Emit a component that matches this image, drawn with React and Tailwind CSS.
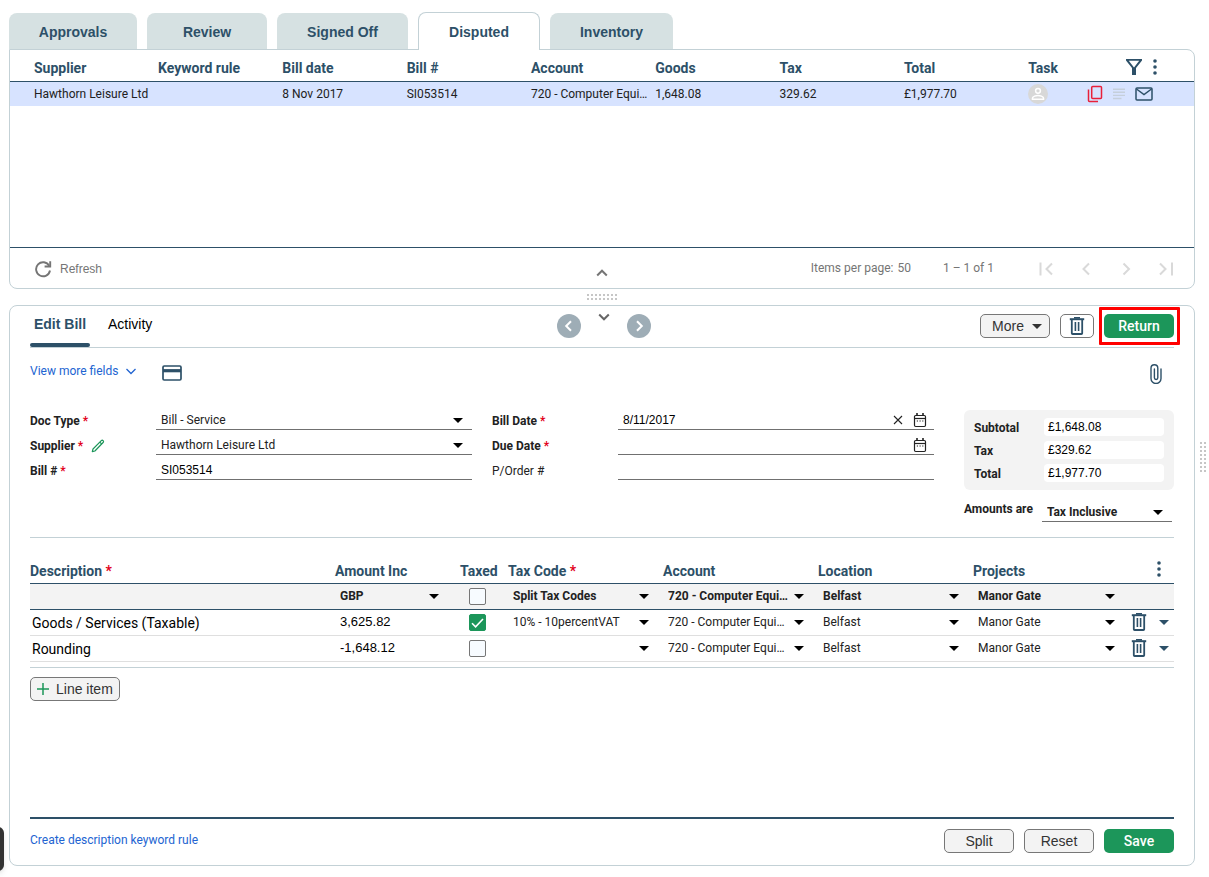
import React, { useState } from "react";

const roboto = "font-['Roboto','Liberation_Sans',sans-serif]";
const arial = "font-['Liberation_Sans',Arial,sans-serif]";

function Caret({ className = "" }) {
  return (
    <svg viewBox="0 0 10 5" className={`h-[5px] w-[10px] shrink-0 fill-current ${className}`} aria-hidden="true">
      <path d="M0 0h10L5 5z" />
    </svg>
  );
}

function Chevron({ dir, className = "size-3.5" }) {
  const paths = {
    up: "M2.2 9.5 7 4.700l4.800 4.800",
    down: "M2.2 4.5 7 9.300l4.800-4.800",
    left: "M9 2.2 4.2 7 9 11.8",
    right: "M5 2.2 9.8 7 5 11.8",
  };
  return (
    <svg viewBox="0 0 14 14" className={`${className} fill-none stroke-current stroke-2`} aria-hidden="true">
      <path d={paths[dir]} />
    </svg>
  );
}

function PageArrow({ d, bar }) {
  return (
    <svg viewBox="0 0 16 16" className="size-4 fill-none stroke-current stroke-2" aria-hidden="true">
      <path d={d} />
      {bar && <path d={bar} />}
    </svg>
  );
}

function Trash() {
  return (
    <svg viewBox="0 0 16 18" className="h-[18px] w-4 fill-none stroke-current" aria-hidden="true">
      <path d="M.8 2.200h14.400" strokeWidth="2" />
      <path d="M5 .8h6" strokeWidth="1.600" />
      <path d="M2.800 2.500v13.700q0 .8.800.8h8.800q.8 0 .8-.8V2.500" strokeWidth="1.800" />
      <path d="M6.400 5v9M9.600 5v9" strokeWidth="1.600" />
    </svg>
  );
}

function Dots() {
  return (
    <svg viewBox="0 0 4 16" className="h-4 w-1 fill-current" aria-hidden="true">
      <circle cx="2" cy="2" r="1.8" />
      <circle cx="2" cy="8" r="1.8" />
      <circle cx="2" cy="14" r="1.8" />
    </svg>
  );
}

function Calendar() {
  return (
    <svg viewBox="0 0 14 16" className="h-4 w-3.5 fill-none stroke-[#222]" aria-hidden="true">
      <rect x="1.5" y="3.5" width="11" height="11" rx="1.2" strokeWidth="1.2" />
      <path d="M1.5 6.5h11" strokeWidth="1.2" />
      <path d="M4 1v3M10 1v3" strokeWidth="1.6" />
      <path d="M3.800 9h6.600" strokeWidth="1.200" strokeDasharray="1.200 1.500" />
    </svg>
  );
}

function GripDots({ cols, rows, className }) {
  const cells = [];
  for (let r = 0; r < rows; r++)
    for (let c = 0; c < cols; c++)
      cells.push(<rect key={`${r}-${c}`} x={c * 4} y={r * 4} width="2" height="2" />);
  return (
    <svg viewBox={`0 0 ${cols * 4 - 2} ${rows * 4 - 2}`} className={`fill-[#c6c6c6] ${className}`} aria-hidden="true">
      {cells}
    </svg>
  );
}

function Select({ label, id, value, className = "", caret = "mr-[9px]" }) {
  return (
    <div className={`grid grid-cols-1 items-center ${className}`}>
      <select
        id={id}
        aria-label={label}
        defaultValue={value}
        className="col-start-1 row-start-1 h-[18px] w-full appearance-none bg-transparent pl-[5px] outline-none"
      >
        <option>{value}</option>
      </select>
      <Caret className={`pointer-events-none col-start-1 row-start-1 justify-self-end text-black ${caret}`} />
    </div>
  );
}

function Star() {
  return <span className="text-[#e2001a]"> *</span>;
}

function Label({ htmlFor, children, required, plain }) {
  return (
    <label htmlFor={htmlFor} className={`w-[126px] shrink-0 pt-1.5 text-xs ${plain ? "" : "font-bold"}`}>
      {children}
      {required && <Star />}
    </label>
  );
}

function Check({ label, initial = false }) {
  const [on, setOn] = useState(initial);
  return (
    <span className="grid size-[17px] grid-cols-1">
      <input
        type="checkbox"
        aria-label={label}
        checked={on}
        onChange={() => setOn(!on)}
        className="col-start-1 row-start-1 size-[17px] appearance-none rounded-xs border border-[#767676] bg-[#f7fbff] checked:border-[#1c965a] checked:bg-[#1c965a]"
      />
      {on && (
        <svg
          viewBox="0 0 17 17"
          className="pointer-events-none col-start-1 row-start-1 size-[17px] fill-none stroke-white stroke-[1.6]"
          aria-hidden="true"
        >
          <path d="M3 9.2 6.6 12.8 14 5" />
        </svg>
      )}
    </span>
  );
}

const tabs = [
  { name: "Approvals", width: "w-32" },
  { name: "Review", width: "w-[120px]" },
  { name: "Signed Off", width: "w-[131px]" },
  { name: "Disputed", width: "w-[122px]" },
  { name: "Inventory", width: "w-[123px]" },
];

function TopTabs() {
  return (
    <nav className={`z-10 flex h-[38px] items-end gap-2.5 text-sm font-bold text-[#2d5068] ${arial}`}>
      {tabs.map((t) => (
        <button
          key={t.name}
          type="button"
          className={
            t.name === "Disputed"
              ? `h-[38px] rounded-t-lg border border-b-0 border-[#c3d1d6] bg-white pt-px ${t.width}`
              : `mb-px h-9 rounded-t-lg bg-[#d6e1e2] pt-0.5 ${t.width}`
          }
        >
          {t.name}
        </button>
      ))}
    </nav>
  );
}

const billCols = ["Supplier", "Keyword rule", "Bill date", "Bill #", "Account", "Goods", "Tax", "Total"];
const billRow = ["Hawthorn Leisure Ltd", "", "8 Nov 2017", "SI053514", "720 - Computer Equi…", "1,648.08", "329.62", "£1,977.70"];

function BillsPanel() {
  return (
    <section className="-mt-px rounded-lg rounded-tl-none border border-[#c3d1d6] bg-white">
      <div className="h-[198px] border-b border-[#2d5068]">
        <table className="w-full table-fixed border-collapse text-left">
          <thead>
            <tr className="h-[31px] border-b border-[#2d5068] text-sm text-[#2d5068]">
              {billCols.map((c, i) => (
                <th key={c} className={`pt-[5px] font-bold ${i === 0 ? "w-[12.5%] pl-6" : "w-[10.5%]"}`}>
                  {c}
                </th>
              ))}
              <th className="w-[5%] pt-[5px] font-bold">Task</th>
              <th className="w-[9%] pt-1">
                <span className="flex items-center gap-2.5 pl-[38px]">
                  <button type="button" aria-label="Filter">
                    <svg viewBox="0 0 18 18" className="size-[18px] fill-current" aria-hidden="true">
                      <path fillRule="evenodd" d="M1 1h16v1.500L11 10v7H7v-7L1 2.500zM3.800 2.700 9 9.400l5.200-6.700z" />
                    </svg>
                  </button>
                  <button type="button" aria-label="Column options">
                    <Dots />
                  </button>
                </span>
              </th>
            </tr>
          </thead>
          <tbody>
            <tr className="h-[25px] bg-[#d7e3ff] text-xs text-[#212121]">
              {billRow.map((v, i) => (
                <td key={i} className={`whitespace-nowrap ${i === 0 ? "pl-6" : ""}`}>
                  {v}
                </td>
              ))}
              <td>
                <svg viewBox="0 0 20 20" className="size-5" aria-hidden="true">
                  <circle cx="10" cy="10" r="10" className="fill-[#d8d8d8]" />
                  <g className="fill-none stroke-white" strokeWidth="1.5">
                    <circle cx="10" cy="6.8" r="2.4" />
                    <path d="M4.5 15.2v-1.1c0-1.8 3.6-2.7 5.500-2.700s5.500.9 5.500 2.700v1.1z" />
                  </g>
                </svg>
              </td>
              <td>
                <div className="flex items-center gap-[9px]">
                  <svg viewBox="0 0 16 18" className="h-[18px] w-4 fill-none stroke-[#e8203a]" strokeWidth="1.500" aria-hidden="true">
                    <rect x="4.700" y="1.500" width="9.800" height="12" rx="1" />
                    <path d="M1.500 4.500v11q0 1 1 1h8.500" />
                  </svg>
                  <svg viewBox="0 0 14 12" className="h-3 w-3.5 stroke-[#c5cfdb]" strokeWidth="1.400" aria-hidden="true">
                    <path d="M1 1.200h12M1 4.300h12M1 7.400h12M1 10.500h8.500" />
                  </svg>
                  <svg viewBox="0 0 18 14" className="h-3.5 w-[18px] fill-none stroke-[#2d5068]" strokeWidth="1.500" aria-hidden="true">
                    <rect x="1" y="1" width="16" height="12" rx="1" />
                    <path d="M1.500 2 9 7.500 16.500 2" />
                  </svg>
                </div>
              </td>
            </tr>
          </tbody>
        </table>
      </div>
      <div className="grid h-10 grid-cols-[1fr_auto_1fr] items-center text-xs text-[#757575]">
        <button type="button" className={`flex items-center gap-2 justify-self-start pl-6 pt-px ${arial}`}>
          <svg viewBox="0 0 18 18" className="size-[18px] fill-none stroke-current" strokeWidth="1.900" aria-hidden="true">
            <path d="M15.200 5.800A7 7 0 1 0 16 10.500" />
            <path d="M16.200 1.200v5.300h-5.600" />
          </svg>
          Refresh
        </button>
        <button type="button" aria-label="Collapse list" className="pt-2.5">
          <Chevron dir="up" />
        </button>
        <div className="flex items-center justify-self-end pr-5">
          <span className="mr-1">Items per page:</span>
          <span className="mr-8">50</span>
          <span className="mr-11">1 – 1 of 1</span>
          <span className="flex gap-6 pt-0.5 text-[#d9d9d9]">
            <button type="button" aria-label="First page">
              <PageArrow d="M14 2.500 8.500 8 14 13.500" bar="M2.500 1.500v13" />
            </button>
            <button type="button" aria-label="Previous page">
              <PageArrow d="M11 2.500 5.500 8 11 13.500" />
            </button>
            <button type="button" aria-label="Next page">
              <PageArrow d="M5.500 2.500 11 8 5.500 13.500" />
            </button>
            <button type="button" aria-label="Last page">
              <PageArrow d="M2 2.500 7.500 8 2 13.500" bar="M14 1.500v13" />
            </button>
          </span>
        </div>
      </div>
    </section>
  );
}

const grayBtn = "h-6 rounded-[5px] border border-[#777] bg-[#f3f3f3] text-sm text-[#333]";
const greenBtn = "h-6 w-[70px] rounded-[5px] bg-[#1c965a] text-sm font-medium text-white";

function EditHeader() {
  return (
    <header className="grid h-[42px] grid-cols-[1fr_auto_1fr] border-b border-[#c3d1d6]">
      <nav className={`flex items-start gap-[18px] text-sm ${arial}`}>
        <button
          type="button"
          className="-mb-px flex h-[41px] w-[60px] flex-col items-center justify-between pt-2 font-bold text-[#2d5068]"
        >
          Edit Bill
          <span className="h-1 w-full rounded-xs bg-[#2d5068]" />
        </button>
        <button type="button" className="pt-2 text-black">
          Activity
        </button>
      </nav>
      <div className="flex items-start gap-4 pl-1 pt-2">
        <button type="button" aria-label="Previous bill" className="grid size-6 place-items-center rounded-full bg-[#9eadb6] text-white">
          <Chevron dir="left" />
        </button>
        <button type="button" aria-label="Collapse bill" className="-mt-1 text-[#666]">
          <Chevron dir="down" />
        </button>
        <button type="button" aria-label="Next bill" className="grid size-6 place-items-center rounded-full bg-[#9eadb6] text-white">
          <Chevron dir="right" />
        </button>
      </div>
      <div className="flex items-start gap-2.5 justify-self-end pt-2">
        <button type="button" className={`flex w-[70px] items-center justify-center gap-2 pl-1 ${grayBtn} ${arial}`}>
          More
          <Caret />
        </button>
        <button
          type="button"
          aria-label="Delete bill"
          className="grid h-6 w-[34px] place-items-center rounded-[5px] border border-[#777] bg-white text-[#2d5068]"
        >
          <Trash />
        </button>
        <div className="relative">
          <button type="button" className={`block ${greenBtn}`}>
            Return
          </button>
          <span className="pointer-events-none absolute -inset-y-[7px] -left-[5px] -right-[6px] rounded-[1px] border-[3px] border-[#ff0000]" />
        </div>
      </div>
    </header>
  );
}

const line = "border-b border-[#707070]";
const fieldText = `min-w-0 flex-1 bg-transparent pl-[5px] text-xs text-black outline-none ${arial}`;

function Fields() {
  const totals = [
    ["Subtotal", "£1,648.08"],
    ["Tax", "£329.62"],
    ["Total", "£1,977.70"],
  ];
  return (
    <div className="flex items-start pt-[17px] text-xs text-[#222]">
      <div className="mr-5 flex-1">
        <div className="flex h-[25px] items-center">
          <Label htmlFor="docType" required>Doc Type</Label>
          <Select id="docType" value="Bill - Service" className={`h-[25px] flex-1 pt-1.5 ${line}`} />
        </div>
        <div className="flex h-[25px] items-center">
          <div className="flex w-[126px] shrink-0 items-center gap-2 pt-1.5">
            <label htmlFor="supplier" className="text-xs font-bold">
              Supplier
              <Star />
            </label>
            <button type="button" aria-label="Edit supplier">
              <svg viewBox="0 0 14 14" className="size-3.5 fill-none stroke-[#1c965a]" strokeWidth="1.200" strokeLinejoin="round" aria-hidden="true">
                <path d="M1.300 12.700 2 10 10.300 1.700q.9-.9 1.800 0t0 1.800L3.900 12z" />
                <path d="m8.800 3.200 2 2" />
              </svg>
            </button>
          </div>
          <Select id="supplier" value="Hawthorn Leisure Ltd" className={`h-[25px] flex-1 pt-1.5 ${line}`} />
        </div>
        <div className="flex h-[25px] items-center">
          <Label htmlFor="billNo" required>Bill #</Label>
          <div className={`flex h-[25px] flex-1 items-center pt-1.5 ${line}`}>
            <input id="billNo" defaultValue="SI053514" className={fieldText} />
          </div>
        </div>
      </div>
      <div className="mr-[30px] flex-1">
        <div className="flex h-[25px] items-center">
          <Label htmlFor="billDate" required>Bill Date</Label>
          <div className={`flex h-[25px] flex-1 items-center pr-[7px] pt-1.5 ${line}`}>
            <input id="billDate" defaultValue="8/11/2017" className={fieldText} />
            <button type="button" aria-label="Clear date" className="mr-2.5">
              <svg viewBox="0 0 10 10" className="size-2.5 stroke-[#222]" strokeWidth="1.100" aria-hidden="true">
                <path d="m1 1 8 8M9 1 1 9" />
              </svg>
            </button>
            <button type="button" aria-label="Pick bill date">
              <Calendar />
            </button>
          </div>
        </div>
        <div className="flex h-[25px] items-center">
          <Label htmlFor="dueDate" required>Due Date</Label>
          <div className={`flex h-[25px] flex-1 items-center pr-[7px] pt-1.5 ${line}`}>
            <input id="dueDate" className={fieldText} />
            <button type="button" aria-label="Pick due date">
              <Calendar />
            </button>
          </div>
        </div>
        <div className="flex h-[25px] items-center">
          <Label htmlFor="pOrder" plain>P/Order #</Label>
          <div className={`flex h-[25px] flex-1 items-center pt-1.5 ${line}`}>
            <input id="pOrder" className={fieldText} />
          </div>
        </div>
      </div>
      <div className="w-[210px] shrink-0 pt-[5px]">
        <div className="flex flex-col gap-[5px] rounded-md bg-[#f3f3f3] px-2.5 py-2">
          {totals.map(([k, v]) => (
            <div key={k} className="flex h-[18px] items-center justify-between">
              <label htmlFor={k} className="pt-px font-bold">
                {k}
              </label>
              <input id={k} defaultValue={v} className={`h-[18px] w-[120px] rounded-sm bg-white pl-1 text-black ${arial}`} />
            </div>
          ))}
        </div>
        <div className="flex items-center gap-[9px] pt-2 font-bold">
          <label htmlFor="amountsAre" className="whitespace-nowrap pb-0.5">
            Amounts are
          </label>
          <Select id="amountsAre" value="Tax Inclusive" className={`mr-0.5 h-6 flex-1 pt-[5px] ${line}`} />
        </div>
      </div>
    </div>
  );
}

const lineHeads = [
  { name: "Description", req: true, w: "" },
  { name: "Amount Inc", w: "w-[125px]" },
  { name: "Taxed", w: "w-12" },
  { name: "Tax Code", req: true, w: "w-[155px]" },
  { name: "Account", w: "w-[155px]" },
  { name: "Location", w: "w-[155px]" },
  { name: "Projects", w: "w-[155px]" },
];

const lineItems = [
  { desc: "Goods / Services (Taxable)", amount: "3,625.82", taxed: true, code: "10% - 10percentVAT" },
  { desc: "Rounding", amount: "-1,648.12", taxed: false, code: "" },
];

function LineItems() {
  return (
    <div className="mt-[15px] border-b border-t border-[#c3d1d6] pb-[5px] pt-[21px]">
      <table className="w-full table-fixed border-collapse text-left text-xs text-[#222]">
        <thead>
          <tr className="h-6 border-b border-[#2d5068] text-sm text-[#2d5068]">
            {lineHeads.map((h) => (
              <th key={h.name} className={`whitespace-nowrap pt-px font-bold ${h.w}`}>
                {h.name}
                {h.req && <Star />}
              </th>
            ))}
            <th className="w-[46px] pb-1">
              <button type="button" aria-label="Line options" className="ml-[29px] block">
                <Dots />
              </button>
            </th>
          </tr>
        </thead>
        <tbody>
          <tr className="h-[26px] border-b border-[#2d5068] bg-[#f3f3f3] font-bold">
            <td />
            <td><Select label="Currency" value="GBP" caret="mr-[21px]" /></td>
            <td className="pl-[9px]"><Check label="All taxed" /></td>
            <td><Select label="Tax code for all" value="Split Tax Codes" caret="mr-3.5" /></td>
            <td><Select label="Account for all" value="720 - Computer Equi…" caret="mr-3.5" /></td>
            <td><Select label="Location for all" value="Belfast" caret="mr-3.5" /></td>
            <td><Select label="Project for all" value="Manor Gate" caret="mr-[13px]" /></td>
            <td />
          </tr>
          {lineItems.map((r) => (
            <tr key={r.desc} className="h-[26px] border-b border-[#dfdfdf]">
              <td>
                <input aria-label="Description" defaultValue={r.desc} className="w-full bg-transparent pl-0.5 pt-px text-sm text-black" />
              </td>
              <td>
                <input aria-label="Amount" defaultValue={r.amount} className={`w-full bg-transparent pl-[5px] text-[13px] text-black ${arial}`} />
              </td>
              <td className="pl-[9px]"><Check label="Taxed" initial={r.taxed} /></td>
              <td><Select label="Tax code" value={r.code} caret="mr-3.5" /></td>
              <td><Select label="Account" value="720 - Computer Equi…" caret="mr-3.5" /></td>
              <td><Select label="Location" value="Belfast" caret="mr-3.5" /></td>
              <td><Select label="Project" value="Manor Gate" caret="mr-[13px]" /></td>
              <td>
                <div className="flex items-center gap-3 pl-[3px] text-[#2d5068]">
                  <button type="button" aria-label="Delete line"><Trash /></button>
                  <button type="button" aria-label="More line actions"><Caret /></button>
                </div>
              </td>
            </tr>
          ))}
        </tbody>
      </table>
    </div>
  );
}

function EditPanel() {
  return (
    <section className="flex flex-1 flex-col rounded-lg border border-[#c3d1d6] bg-white px-5">
      <EditHeader />
      <div className="flex h-10 items-center justify-between pt-2.5">
        <div className="flex items-center gap-6">
          <button type="button" className="mb-1 flex items-center gap-1.5 text-xs text-[#2264d1]">
            View more fields
            <svg viewBox="0 0 14 14" className="size-3.5 fill-none stroke-current" strokeWidth="1.300" aria-hidden="true">
              <path d="M2.500 5 7 9.500 11.500 5" />
            </svg>
          </button>
          <button type="button" aria-label="Payment card" className="text-[#2d5068]">
            <svg viewBox="0 0 20 16" className="h-4 w-5 fill-none stroke-current" aria-hidden="true">
              <rect x="1" y="1" width="18" height="14" rx="1.200" strokeWidth="1.700" />
              <path d="M1 5.700h18" strokeWidth="3.200" />
            </svg>
          </button>
        </div>
        <button type="button" aria-label="Attachments" className="mr-3 pt-0.5 text-[#2d5068]">
          <svg viewBox="0 0 12 20" className="h-5 w-3 fill-none stroke-current" strokeWidth="1.400" strokeLinecap="round" aria-hidden="true">
            <path d="M11 5v9.500a5 5 0 0 1-10 0V4.200a3.400 3.400 0 0 1 6.800 0v9.600a1.700 1.700 0 0 1-3.400 0V5" />
          </svg>
        </button>
      </div>
      <Fields />
      <LineItems />
      <div className="flex-1 pt-[9px]">
        <button type="button" className={`flex w-[90px] items-center gap-[7px] pl-1.5 ${grayBtn} ${arial}`}>
          <svg viewBox="0 0 12 12" className="size-3 stroke-[#1c965a]" strokeWidth="1.500" aria-hidden="true">
            <path d="M6 0v12M0 6h12" />
          </svg>
          Line item
        </button>
      </div>
      <footer className="flex h-12 items-center justify-between border-t-2 border-[#2d5068] pb-0.5">
        <a href="#keyword-rule" className="pb-0.5 text-xs text-[#2264d1]">
          Create description keyword rule
        </a>
        <div className="flex gap-2.5">
          <button type="button" className={`w-[70px] ${grayBtn} ${arial}`}>Split</button>
          <button type="button" className={`w-[70px] ${grayBtn} ${arial}`}>Reset</button>
          <button type="button" className={greenBtn}>Save</button>
        </div>
      </footer>
    </section>
  );
}

export default function App() {
  return (
    <div className={`relative flex min-h-screen overflow-hidden bg-white ${roboto}`}>
      <main className="flex min-w-0 flex-1 flex-col pb-[11px] pl-[9px] pt-3">
        <TopTabs />
        <BillsPanel />
        <div className="flex h-4 items-center justify-center">
          <GripDots cols={8} rows={2} className="h-1.5 w-[30px]" />
        </div>
        <EditPanel />
      </main>
      <aside className="flex w-3.5 shrink-0 items-center justify-end pr-[3px] pt-[37px]">
        <GripDots cols={2} rows={8} className="h-[30px] w-1.5" />
      </aside>
      <div className="absolute -left-2 bottom-1.5 h-11 w-3 rounded-md bg-[#333] shadow-md" />
    </div>
  );
}
